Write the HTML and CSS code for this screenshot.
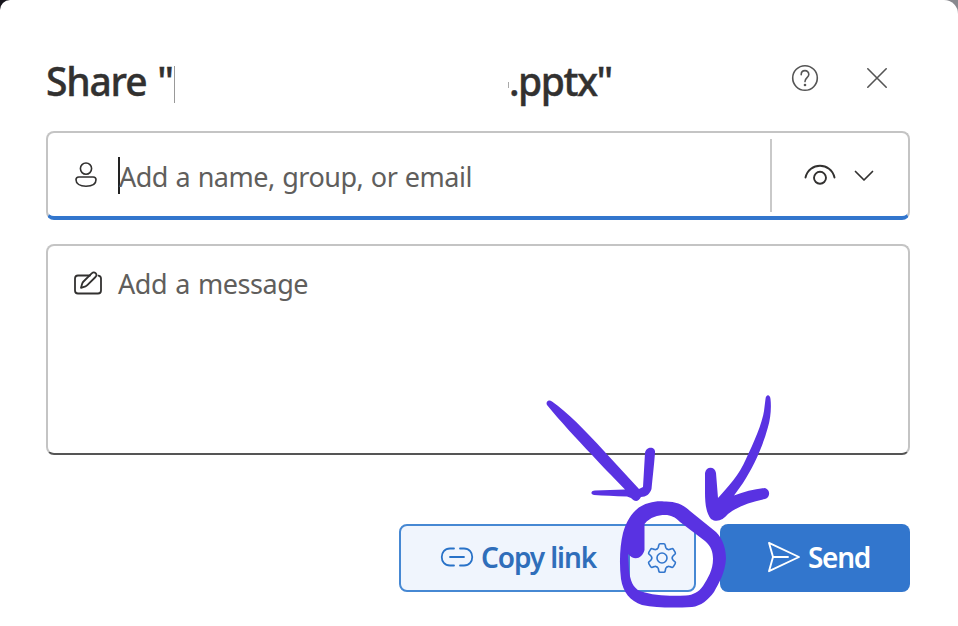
FILE: index.html
```html
<!DOCTYPE html>
<html lang="en">
<head>
<meta charset="utf-8">
<title>Share</title>
<link rel="stylesheet" href="styles.css">
</head>
<body>
<main class="dialog">
  <header class="header">
    <h1 class="title"><span class="title-start">Share "</span><span class="name-mark"></span><span class="title-gap"></span><span class="title-end">.pptx"</span></h1>
    <button class="icon-button" aria-label="Help">
      <svg width="28" height="28" viewBox="0 0 28 28"><circle cx="14" cy="14" r="12.3"/><path d="M10.2 10.7C10.2 5.3 17.8 5.3 17.8 10.6C17.8 13.8 14 13.7 14 17.6"/><circle class="dot" cx="14" cy="21" r="1.3"/></svg>
    </button>
    <button class="icon-button" aria-label="Close">
      <svg width="28" height="28" viewBox="0 0 28 28"><path d="M4.8 4.8 23.2 23.2M23.2 4.8 4.8 23.2"/></svg>
    </button>
  </header>

  <section class="people">
    <svg class="person" width="28" height="28" viewBox="0 0 28 28"><circle cx="14" cy="7.6" r="5.6"/><path d="M6.8 16H21.2Q24 16 24 18.7C24 22.6 20.3 25.2 14 25.2S4 22.6 4 18.7Q4 16 6.8 16Z"/></svg>
    <div class="caret"></div>
    <span class="placeholder name-text">Add a name, group, or email</span>
    <button class="permission" aria-label="Permission">
      <svg width="34" height="24" viewBox="0 0 34 24"><path d="M2.500 13.500C6-2.200 28-2.200 31.500 13.500"/><circle cx="17" cy="13.800" r="6"/></svg>
      <svg class="chevron" width="20" height="12" viewBox="0 0 20 12"><path d="M1.500 1.500 10 10 18.500 1.500"/></svg>
    </button>
  </section>

  <section class="message">
    <svg width="30" height="26" viewBox="0 0 30 26"><path d="M17 4.500H5Q2 4.500 2 7.500V19.500Q2 22.500 5 22.500H25Q28 22.500 28 19.500V7.500Q28 5.200 25.500 4.600"/><path d="M8 16.800 9.300 12.300Q9.700 11.300 10.500 10.500L18.700 2.300C21.500-.2 25 3.200 22.500 6L14.300 14.100Q13.500 14.900 12.500 15.300Z"/></svg>
    <span class="placeholder message-text">Add a message</span>
  </section>

  <footer class="actions">
    <div class="copy-group">
      <button class="copy">
        <svg width="34" height="22" viewBox="0 0 34 22"><path d="M14 2.500H10C-1 2.500-1 19.500 10 19.500H14M20 2.500H24C35 2.500 35 19.500 24 19.500H20M10 11H24"/></svg>
        <span class="copy-text">Copy link</span>
      </button>
      <button class="settings" aria-label="Link settings">
        <svg width="32" height="32" viewBox="-16 -16 32 32">
          <defs><path id="tooth" d="M-5.100-8.900C-4.200-9.400-3.700-10-3.600-11L-3.200-13Q-3-14.200-1.800-14.200H1.800Q3-14.200 3.200-13L3.600-11C3.700-10 4.200-9.400 5.100-8.900"/></defs>
          <use href="#tooth"/><use href="#tooth" transform="rotate(60)"/><use href="#tooth" transform="rotate(120)"/><use href="#tooth" transform="rotate(180)"/><use href="#tooth" transform="rotate(240)"/><use href="#tooth" transform="rotate(300)"/>
          <circle r="5"/>
        </svg>
      </button>
    </div>
    <button class="send">
      <svg width="34" height="32" viewBox="0 0 34 32"><path d="M2 1.800 32 16 2 30.200 6 16ZM6 16H21"/></svg>
      <span class="send-text">Send</span>
    </button>
  </footer>

  <svg class="ink" width="958" height="626" viewBox="0 0 958 626" aria-hidden="true">
    <path d="M547 405C545.500 402 548.500 399 552 401.500C567 412 585 430 604 451L639 489L643 487L645 453C646 446 656 446 655 453C654 466 652.500 478 651.500 489C650 494 646 497 641 497C638 502 635 502 631 498L627 496.500C614 496 604 495.500 594 495C590 494 591 490.500 595 490.500L625 489.500C611 475 602 466 592 455C576 438 560 421 547 405Z"/>
    <path d="M765.500 399C766 394 770 394 770.500 399C771.500 408 770.500 419 768 427C762 449 753 467 743 483Q738 490 734 495.500C744 492 754 489 765 488C771 490 770 498 765 499C751 502 738 506 728 514C723 520 717 523 711 519C706 513 705 503 705 492V473C706 466 715 466 716 473L718 498C729 486 739 475 746 459C754 442 762 424 764 411Z"/>
    <path fill-rule="evenodd" d="M664 501.500C674 501 683 504 690 511L716 532C723 539 726 549 726 559C725 573 719 583 714 592C708 600 701 606 692 607C674 608 657 608 642 605C630 601 623 592 621 579C619 563 620 545 623 533C627 518 636 506 649 503C654 501.500 659 501 664 501.500ZM644.500 524C650 517 658 515 665 515C671 515 675 517 680 522L705 541C711 546 713 552 713 559C713 570 708 578 703 586C699 592 693 595 686 595.500C670 596 654 596 640 591C633 588 630 580 629 570L628 554C634 561 642 559 644.500 550Z"/>
  </svg>
</main>
</body>
</html>
```
FILE: styles.css
```css
* { box-sizing: border-box; }
body {
  margin: 0;
  width: 958px;
  height: 626px;
  overflow: hidden;
  background: linear-gradient(90deg, #17151c 50%, #88888e 50%);
  font-family: "Noto Sans", "Open Sans", sans-serif;
}
button { border: 0; padding: 0; background: none; font: inherit; color: inherit; }
svg { display: block; flex: none; fill: none; stroke: currentColor; stroke-width: 1.6; stroke-linecap: round; stroke-linejoin: round; }
.dialog {
  position: relative;
  width: 958px;
  height: 626px;
  padding: 52px 48px 34px 46px;
  background: #fff;
  border-radius: 10px 14px 0 0;
}
.header { display: flex; height: 79px; padding-right: 19px; color: #555; }
.title {
  display: flex;
  flex: 1;
  margin: 0;
  color: #323130;
  font-size: 39px;
  font-weight: 500;
  line-height: 58px;
  white-space: pre;
  -webkit-text-stroke: .4px #323130;
}
.title-start { width: 128px; letter-spacing: -1.200px; word-spacing: 2px; }
.name-mark { width: 1px; height: 37px; margin-top: 14px; background: #999; }
.title-gap { width: 334px; height: 6px; margin-top: 30px; border-right: 1px solid #aaa; }
.title-end { letter-spacing: -1.500px; }
.icon-button { display: flex; width: 28px; height: 28px; margin-top: 12px; margin-left: 44px; }
.icon-button .dot { fill: currentColor; stroke: none; }
.people {
  display: flex;
  width: 864px;
  height: 89px;
  padding: 6px 0 0 26px;
  border: 2px solid #c4c4c4;
  border-bottom: 4px solid #3276cd;
  border-radius: 8px;
  color: #323130;
}
.person { width: 28px; margin-top: 22px; margin-left: -2px; }
.caret { width: 2px; height: 37px; margin: 18px 0 0 18px; background: #222; }
.placeholder { color: #605e5c; font-size: 27px; line-height: 38px; white-space: nowrap; }
.name-text { flex: 1; margin: 19px 0 0 -1px; letter-spacing: -.500px; word-spacing: 1px; }
.permission {
  display: flex;
  width: 138px;
  height: 73px;
  padding: 25px 0 0 31px;
  border-left: 2px solid #c9c9c9;
}
.permission svg { stroke-width: 1.900; }
.permission .chevron { margin: 6px 0 0 17px; stroke-width: 1.700; }
.message {
  display: flex;
  width: 864px;
  height: 211px;
  margin-top: 24px;
  padding: 25px 0 0 25px;
  border: 2px solid #c4c4c4;
  border-bottom-color: #555;
  border-radius: 8px;
  color: #323130;
}
.message svg { stroke-width: 1.800; }
.message-text { margin: -6px 0 0 15px; letter-spacing: -.450px; word-spacing: 1.500px; }
.actions { display: flex; gap: 24px; margin-top: 69px; padding-left: 353px; height: 68px; }
.copy-group {
  display: flex;
  width: 297px;
  border: 2px solid #4688d3;
  border-radius: 8px;
  background: #f0f5fd;
  color: #2f6eba;
}
.copy, .send { display: flex; align-items: center; padding-bottom: 2px; font-size: 28px; font-weight: 600; white-space: nowrap; }
.copy { width: 227px; padding-left: 39px; }
.copy svg { stroke: #2872c8; stroke-width: 1.800; }
.copy-text { margin-left: 7px; letter-spacing: -1.100px; }
.settings { display: flex; align-items: center; padding-left: 16px; width: 66px; border-left: 2px solid #4688d3; color: #3276cd; }
.send { width: 190px; padding-left: 47px; border-radius: 8px; background: #3276cd; color: #fff; }
.send svg { stroke-width: 1.900; }
.send-text { margin-left: 7px; letter-spacing: -1.300px; }
.ink { position: absolute; left: 0; top: 0; pointer-events: none; fill: #5932e2; stroke: none; }
```
